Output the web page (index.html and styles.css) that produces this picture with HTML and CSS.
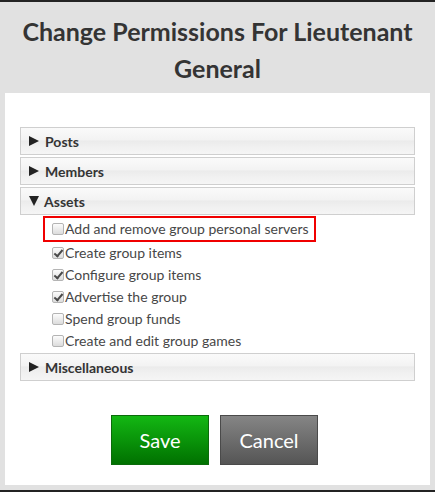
FILE: index.html
```html
<!DOCTYPE html>
<html>
<head>
<meta charset="utf-8">
<link rel="stylesheet" href="styles.css">
</head>
<body>
<div class="modal">
  <h1 class="title">Change Permissions For Lieutenant General</h1>
  <div class="panel">
    <div class="section-header"><span class="tri tri-right"></span><span class="label">Posts</span></div>
    <div class="section-header"><span class="tri tri-right"></span><span class="label">Members</span></div>
    <div class="section-header open"><span class="tri tri-down"></span><span class="label">Assets</span></div>
    <div class="items">
      <label class="item highlighted"><input type="checkbox"><span>Add and remove group personal servers</span></label>
      <label class="item"><input type="checkbox" checked><span>Create group items</span></label>
      <label class="item"><input type="checkbox" checked><span>Configure group items</span></label>
      <label class="item"><input type="checkbox" checked><span>Advertise the group</span></label>
      <label class="item"><input type="checkbox"><span>Spend group funds</span></label>
      <label class="item"><input type="checkbox"><span>Create and edit group games</span></label>
    </div>
    <div class="section-header"><span class="tri tri-right"></span><span class="label">Miscellaneous</span></div>
    <div class="buttons">
      <button class="btn btn-save">Save</button>
      <button class="btn btn-cancel">Cancel</button>
    </div>
  </div>
</div>
</body>
</html>
```

FILE: styles.css
```css
html, body {
  margin: 0;
  padding: 0;
  background: #232323;
}
body {
  font-family: Lato, "Liberation Sans", sans-serif;
  color: #333;
}
.modal {
  margin-top: 2px;
  height: 488px;
  box-sizing: border-box;
  background: #e1e1e1;
  padding: 0 5px 5px;
  display: flex;
  flex-direction: column;
}
.title {
  margin: 0;
  padding: 11px 10px 6px;
  font-size: 25px;
  line-height: 37px;
  font-weight: 700;
  text-align: center;
  color: #343434;
}
.panel {
  flex: 1;
  background: #fff;
  padding: 34px 15px 20px;
}
.section-header {
  height: 26px;
  border: 1px solid #cfcfcf;
  background: linear-gradient(to bottom, #fafafa 0%, #f3f3f3 45%, #ebebeb 50%, #f1f1f1 75%, #f5f5f5 100%);
  margin-bottom: 2px;
  display: flex;
  align-items: center;
  padding-left: 8px;
  font-size: 14px;
  font-weight: 700;
  color: #343434;
}
.section-header.open {
  margin-bottom: 1px;
}
.tri {
  width: 0;
  height: 0;
  margin-right: 6px;
}
.tri-right {
  border-left: 10px solid #222;
  border-top: 5.5px solid transparent;
  border-bottom: 5.5px solid transparent;
}
.tri-down {
  border-top: 10px solid #222;
  border-left: 5.5px solid transparent;
  border-right: 5.5px solid transparent;
  margin-right: 5px;
}
.items {
  padding-left: 23px;
  padding-bottom: 1px;
  display: flex;
  flex-direction: column;
  align-items: flex-start;
}
.item {
  height: 22px;
  display: flex;
  align-items: center;
  padding-left: 9px;
  padding-bottom: 1px;
  box-sizing: border-box;
  font-size: 14px;
  color: #474747;
}
.item.highlighted {
  height: 26px;
  border: 2px solid #f00000;
  padding-left: 7px;
  padding-right: 5px;
}
.item input {
  appearance: none;
  -webkit-appearance: none;
  width: 12px;
  height: 12px;
  margin: 0 1px 0 0;
  border: 1px solid #b4b4b4;
  border-radius: 2px;
  background: linear-gradient(to bottom, #fcfcfc, #dcdcdc);
  position: relative;
  box-sizing: border-box;
}
.item input:checked::after {
  content: "";
  position: absolute;
  left: 3px;
  top: 0px;
  width: 3px;
  height: 7px;
  border-right: 2px solid #4a4a4a;
  border-bottom: 2px solid #4a4a4a;
  transform: rotate(40deg);
}
.buttons {
  margin-top: 34px;
  display: flex;
  justify-content: center;
  gap: 11px;
  padding-right: 6px;
}
.btn {
  width: 98px;
  height: 50px;
  font-family: Lato, "Liberation Sans", sans-serif;
  font-size: 20px;
  color: #fff;
  border-radius: 0;
  cursor: pointer;
  padding: 0;
}
.btn-save {
  background: linear-gradient(to bottom, #13b713, #007100);
  border: 1px solid #0b6b0b;
}
.btn-cancel {
  background: linear-gradient(to bottom, #858585, #555555);
  border: 1px solid #4a4a4a;
}
```
